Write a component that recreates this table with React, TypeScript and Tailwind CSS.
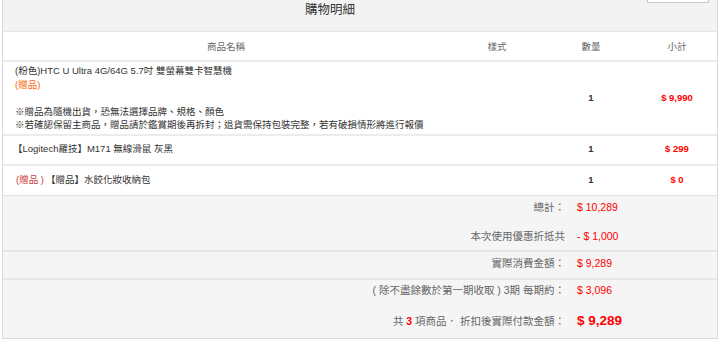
import type { ReactNode } from 'react';

const FONT = "font-[family-name:'Liberation_Sans','Noto_Sans_CJK_TC',sans-serif]";

function SumRow({ label, children, className = '' }: { label: ReactNode; children: ReactNode; className?: string }) {
  return (
    <div className={`flex items-center ${className}`}>
      <div className="flex-1 pr-[12px] text-right text-[10.5px] text-[#666]">{label}</div>
      <div className="w-[140px] text-[10.5px] text-[#ff0000]">{children}</div>
    </div>
  );
}

export default function App() {
  return (
    <div className={`${FONT} w-[720px] h-[343px] overflow-hidden bg-white`}>
      <div className="ml-[2px] w-[716px] border-x border-b border-[#d9d9d9]">
        {/* Title band */}
        <div className="relative flex h-[32px] justify-center border-b border-[#e6e6e6] bg-[#f3f3f3] pt-[3px] pr-[60px]">
          <span className="text-[12.5px] leading-[14px] text-[#333]">購物明細</span>
          <div className="absolute right-[8px] top-[-18px] h-[21px] w-[62px] border border-[#c8c8c8] bg-white" />
        </div>

        {/* Column headers */}
        <div className="grid h-[30px] grid-cols-[446px_96px_92px_80px] items-center border-b-2 border-[#ececec] pt-[2px] text-[9.5px] text-[#666]">
          <div className="text-center">商品名稱</div>
          <div className="text-center">樣式</div>
          <div className="text-center">數量</div>
          <div className="text-center">小計</div>
        </div>

        {/* Item 1 */}
        <div className="grid grid-cols-[446px_96px_92px_80px] items-center border-b-2 border-[#ececec] text-[9.5px] text-[#333]">
          <div className="pt-[2px] pb-[2px] pl-[12px] leading-[13.5px]">
            <div>(粉色)HTC U Ultra 4G/64G 5.7吋 雙螢幕雙卡智慧機</div>
            <div className="text-[#ff6600]">(贈品)</div>
            <div className="h-[13.5px]" />
            <div>※贈品為隨機出貨，恐無法選擇品牌、規格、顏色</div>
            <div className="whitespace-nowrap">※若確認保留主商品，贈品請於鑑賞期後再拆封；退貨需保持包裝完整，若有破損情形將進行報價</div>
          </div>
          <div />
          <div className="text-center font-bold">1</div>
          <div className="text-center font-bold text-[#ff0000]">$ 9,990</div>
        </div>

        {/* Item 2 */}
        <div className="grid h-[30px] grid-cols-[446px_96px_92px_80px] items-center border-b-2 border-[#ececec] text-[9.5px] text-[#333]">
          <div className="pl-[10px]">【Logitech羅技】M171 無線滑鼠 灰黑</div>
          <div />
          <div className="text-center font-bold">1</div>
          <div className="text-center font-bold text-[#ff0000]">$ 299</div>
        </div>

        {/* Item 3 */}
        <div className="grid h-[30px] grid-cols-[446px_96px_92px_80px] items-center border-b border-[#e2e2e2] text-[9.5px] text-[#333]">
          <div className="pl-[13px]">
            <span className="text-[#cc3b3b]">(贈品 )</span>
            <span className="ml-[2px]">【贈品】水餃化妝收納包</span>
          </div>
          <div />
          <div className="text-center font-bold">1</div>
          <div className="text-center font-bold text-[#ff0000]">$ 0</div>
        </div>

        {/* Summary */}
        <div className="bg-[#f5f5f5]">
          <div className="flex h-[56px] flex-col justify-center gap-[13px] border-b-2 border-[#e6e6e6] pb-[1px]">
            <SumRow label="總計：">$ 10,289</SumRow>
            <SumRow label="本次使用優惠折抵共">- $ 1,000</SumRow>
          </div>
          <div className="flex h-[28px] flex-col justify-center border-b-2 border-[#e6e6e6] pb-[1px]">
            <SumRow label="實際消費金額：">$ 9,289</SumRow>
          </div>
          <div className="flex h-[58px] flex-col justify-center gap-[13px] pb-[3px]">
            <SumRow label="( 除不盡餘數於第一期收取 ) 3期 每期約：">$ 3,096</SumRow>
            <SumRow
              label={
                <>
                  共 <b className="text-[#ff0000]">3</b> 項商品． 折扣後實際付款金額：
                </>
              }
            >
              <span className="text-[13.5px] font-bold">$ 9,289</span>
            </SumRow>
          </div>
        </div>
      </div>
    </div>
  );
}
